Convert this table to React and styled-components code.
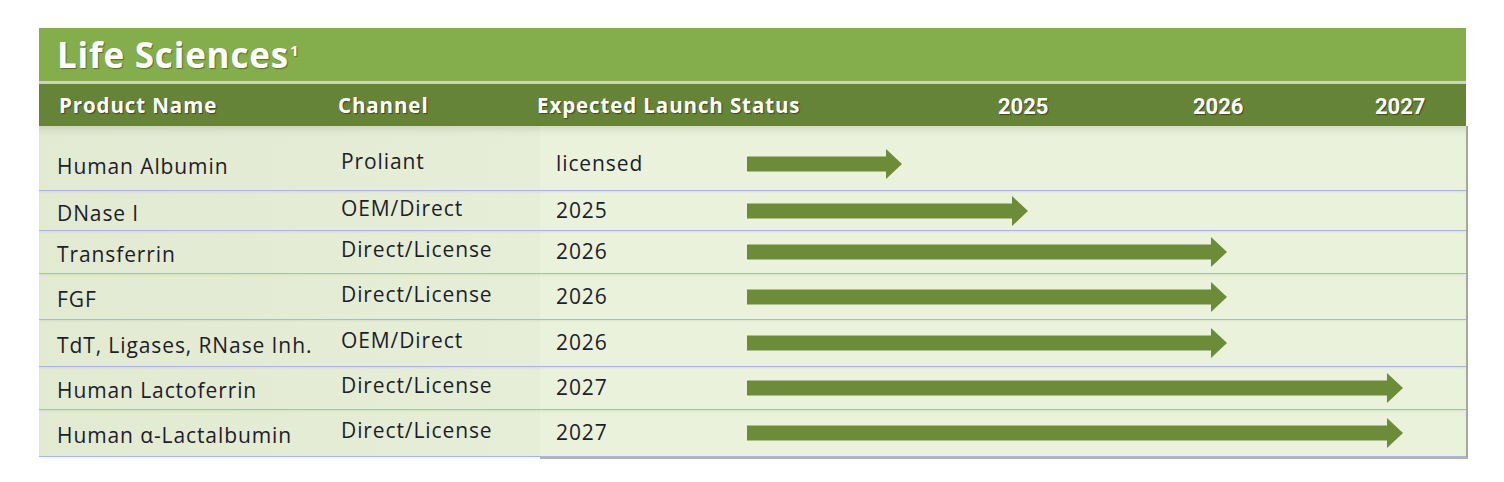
import React from 'react';
import styled, { createGlobalStyle } from 'styled-components';

const GlobalStyle = createGlobalStyle`
  html, body {
    margin: 0;
    padding: 0;
    background: #ffffff;
  }
  body {
    font-family: 'Open Sans', 'Liberation Sans', sans-serif;
  }
`;

const products = [
  { name: 'Human Albumin', channel: 'Proliant', status: 'licensed', length: 155, height: 65, top: 11 },
  { name: 'DNase I', channel: 'OEM/Direct', status: '2025', length: 281, height: 40 },
  { name: 'Transferrin', channel: 'Direct/License', status: '2026', length: 480, height: 43 },
  { name: 'FGF', channel: 'Direct/License', status: '2026', length: 480, height: 46 },
  { name: 'TdT, Ligases, RNase Inh.', channel: 'OEM/Direct', status: '2026', length: 480, height: 47 },
  { name: 'Human Lactoferrin', channel: 'Direct/License', status: '2027', length: 656, height: 43 },
  { name: 'Human \u03B1-Lactalbumin', channel: 'Direct/License', status: '2027', length: 656, height: 47 },
];

const Arrow = ({ length }) => (
  <ArrowSvg width={length} height={30} viewBox={`0 0 ${length} 30`}>
    <path
      d={`M0 7.5 H${length - 16} V0 L${length} 15 L${length - 16} 30 V22.5 H0 Z`}
      fill="#6c8c3a"
    />
  </ArrowSvg>
);

const App = () => {
  return (
    <Page>
      <GlobalStyle />
      <Table>
        <TitleBar>
          Life Sciences<sup>1</sup>
        </TitleBar>
        <HeaderRow>
          <HeadCell>Product Name</HeadCell>
          <HeadCell>Channel</HeadCell>
          <HeadCell>Expected Launch Status</HeadCell>
          <YearCell>2025</YearCell>
          <YearCell>2026</YearCell>
          <YearCell>2027</YearCell>
        </HeaderRow>
        <Body>
          {products.map((p) => (
            <Row key={p.name} $height={p.height} $top={p.top || 0}>
              <NameCell>{p.name}</NameCell>
              <ChannelCell>{p.channel}</ChannelCell>
              <StatusCell>{p.status}</StatusCell>
              <Timeline>
                <Arrow length={p.length} />
              </Timeline>
            </Row>
          ))}
        </Body>
      </Table>
    </Page>
  );
};

const Page = styled.div`
  padding: 28px 0 0 39px;
  width: 1504px;
  height: 482px;
  box-sizing: border-box;
`;

const Table = styled.div`
  width: 1427px;
  display: flex;
  flex-direction: column;
`;

const TitleBar = styled.div`
  height: 53px;
  background: #84ae4b;
  color: #ffffff;
  font-family: 'Open Sans', sans-serif;
  font-weight: 700;
  font-size: 35px;
  letter-spacing: 0.8px;
  display: flex;
  align-items: center;
  padding-left: 18px;
  border-bottom: 3px solid #cad4be;
  text-shadow: 1px 1px 1px rgba(70, 50, 10, 0.55);

  sup {
    font-size: 15px;
    align-self: flex-start;
    margin-top: 12px;
    margin-left: 1px;
  }
`;

const HeaderRow = styled.div`
  height: 42px;
  background: #658438;
  display: grid;
  grid-template-columns: 299px 199px 461px 195px 182px 1fr;
  align-items: center;
  color: #ffffff;
  text-shadow: 1px 1px 1px rgba(40, 30, 10, 0.6);
`;

const HeadCell = styled.div`
  font-family: 'Open Sans', sans-serif;
  font-weight: 700;
  font-size: 20.5px;
  letter-spacing: 0.9px;
  white-space: nowrap;
  &:first-child {
    padding-left: 20px;
  }
`;

const YearCell = styled.div`
  font-family: Roboto, sans-serif;
  font-weight: 700;
  font-size: 22px;
  padding-top: 2px;
`;

const Body = styled.div`
  position: relative;
  background: linear-gradient(90deg, #e3ead2 0, #e6eed7 501px, #eaf2db 501px);
  box-shadow: inset 0 9px 8px -6px rgba(0, 0, 0, 0.12), 2px 0 0 #a4a89d;

  &::after {
    content: '';
    position: absolute;
    left: 501px;
    right: -2px;
    bottom: -2px;
    height: 2px;
    background: #b2b5ac;
  }
`;

const Row = styled.div`
  height: ${(p) => p.$height}px;
  box-sizing: border-box;
  padding-top: ${(p) => p.$top}px;
  display: grid;
  grid-template-columns: 302px 215px 191px 1fr;
  align-items: center;
  border-bottom: 1px solid #a6b6e6;
  box-shadow: 0 2px 2px -1px rgba(90, 100, 80, 0.1);
  color: #1d1d2b;
  font-family: 'Open Sans', sans-serif;
  font-size: 21px;
  letter-spacing: 0.9px;
`;

const NameCell = styled.div`
  padding-left: 18px;
  padding-top: 4px;
  white-space: nowrap;
`;

const ChannelCell = styled.div`
  padding-bottom: 6px;
  white-space: nowrap;
`;

const StatusCell = styled.div`
  padding-bottom: 2px;
`;

const Timeline = styled.div`
  display: flex;
  align-items: center;
`;

const ArrowSvg = styled.svg`
  display: block;
`;

export default App;
